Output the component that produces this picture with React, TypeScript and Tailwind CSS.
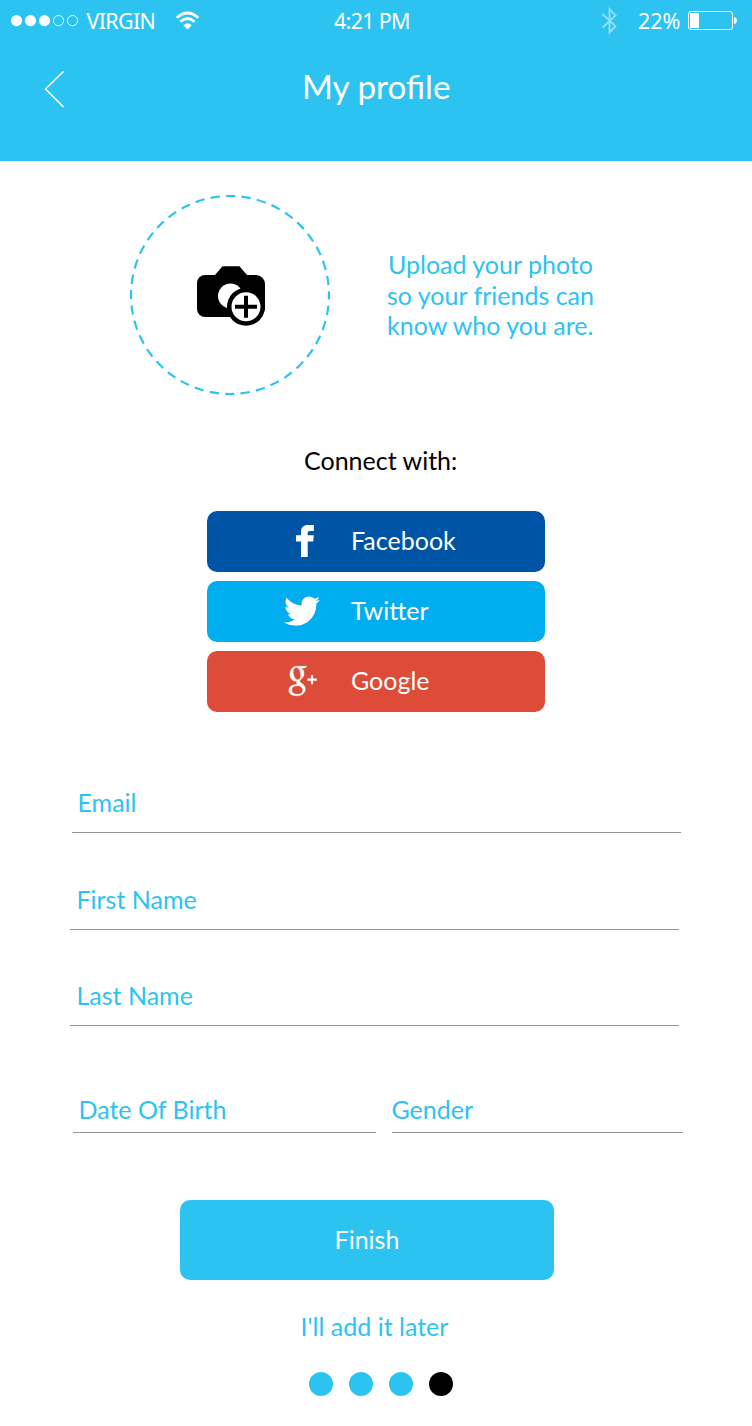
import React from "react";
import { FaTwitter } from "react-icons/fa";

function StatusBar() {
  return (
    <div className="flex h-[42px] items-center font-['Noto_Sans','Open_Sans',sans-serif] text-[21.5px] leading-[42px]">
      <svg className="ml-[10px] h-[14px] w-[70px]" viewBox="0 0 70 14" fill="#fff">
        <circle cx="6.5" cy="6.6" r="5.6" />
        <circle cx="20.5" cy="6.6" r="5.6" />
        <circle cx="34.5" cy="6.6" r="5.6" />
        <circle cx="48.5" cy="6.6" r="5.1" fill="none" stroke="#fff" />
        <circle cx="62.5" cy="6.6" r="5.1" fill="none" stroke="#fff" />
      </svg>
      <span className="ml-[6.5px] h-[42px] w-[88.5px] whitespace-nowrap tracking-[-0.7px]">VIRGIN</span>
      <svg className="h-[20px] w-[26px]" viewBox="0 0 26 20" fill="none" stroke="#fff" strokeWidth="2.8">
        <path d="M1.8 6.7Q12.5 -2.8 23.2 6.7" />
        <path d="M5.4 10.7Q12.5 4.3 19.6 10.7" />
        <path d="M8.3 14.2Q12.5 10.4 16.7 14.2L12.5 18.5Z" fill="#fff" stroke="none" />
      </svg>
      <span className="ml-[133px] h-[42px] w-[267px] whitespace-nowrap tracking-[-0.7px]">4:21 PM</span>
      <svg className="h-[28px] w-[18px]" viewBox="0 0 18 28" fill="none" stroke="#8fdff7" strokeWidth="1.9">
        <path d="M1.5 7L14.5 19.2L8.5 25.5V2.2L14.5 8.5L1.5 20.7" />
      </svg>
      <span className="ml-[19px] h-[42px] w-[50px] whitespace-nowrap tracking-[-0.1px]">22%</span>
      <svg className="h-[20px] w-[50px]" viewBox="0 0 50 20" fill="#fff">
        <rect x="0.5" y="0.5" width="44" height="18" rx="2.5" fill="none" stroke="#fff" />
        <rect x="2" y="2" width="9" height="15" rx="0.5" />
        <path d="M46 6.3Q49 6.6 49 9.6Q49 12.6 46 13Z" />
      </svg>
    </div>
  );
}

function CameraIcon() {
  return (
    <svg className="ml-[2px] mt-[2px] h-[62px] w-[70px]" viewBox="0 0 70 62">
      <path d="M9 10H19L26.5 1.2H43.5L51 10H60A9 9 0 0 1 69 19V43A9 9 0 0 1 60 52H9A8 8 0 0 1 1 44V18A8 8 0 0 1 9 10Z" />
      <circle cx="34.5" cy="31" r="12.5" fill="#fff" />
      <circle cx="50" cy="41.7" r="19" />
      <circle cx="50" cy="41.7" r="14.5" fill="#fff" />
      <path d="M50 30.8V52.8M39 41.7H61" stroke="#000" strokeWidth="4" />
    </svg>
  );
}

function FacebookIcon() {
  return (
    <svg className="h-[34px] w-[20px]" viewBox="0 0 20 34" fill="#fff">
      <path d="M6 33V17.5H1V11.3H6V8C6 3.2 8.5 1 13 1H18.8V7H15C13 7 12.7 8 12.7 9.5V11.3H18.8L18.2 17.5H12.7V33Z" />
    </svg>
  );
}

function GooglePlusIcon() {
  return (
    <svg className="h-[32px] w-[30px]" viewBox="0 0 30 32" fill="#fff">
      <path
        fillRule="evenodd"
        d="M9 1.2H19L16.8 2.9H13.5C15.3 4.400 16 6.400 16 8.600C16 11.200 14.800 12.900 13 14.300C11.600 15.400 11.200 16.300 12.500 17.400L14.600 19C16.500 20.500 17.300 22 17.300 24C17.300 28.200 13.600 30.800 8.600 30.800C3.800 30.800 .8 28.700 .8 25.300C.8 21.600 4.400 19.500 9.300 19.300C8.500 18.300 8.300 17.400 8.700 16.200C4.600 16.400 1.900 13.200 1.900 9.400C1.900 4.700 4.900 1.200 9 1.200ZM8.400 2.600C6.200 2.600 5 4.400 5.200 7.400C5.500 11.300 7.300 14.700 9.800 14.700C12 14.700 12.900 13 12.700 10C12.400 6.100 10.900 2.600 8.400 2.600ZM10.400 20.700C6.200 20.700 3.700 22.200 3.700 25C3.700 27.700 6.100 29.300 9.600 29.300C13 29.300 14.800 27.600 14.800 25.200C14.800 23.200 13.500 22.400 11.400 20.800Z"
        stroke="#fff"
        strokeWidth="0.4"
      />
      <path d="M24 10V19.2M19.4 14.600H28.800" stroke="#fff" strokeWidth="2.2" />
    </svg>
  );
}

function Social({ color, label, children }: { color: string; label: string; children: React.ReactNode }) {
  return (
    <button className={`flex h-[61px] w-[338px] items-center rounded-[10px] pb-[2px] text-white ${color}`}>
      <span className="ml-[73px] flex w-[71px] items-center">{children}</span>
      <span className="h-[31px]">{label}</span>
    </button>
  );
}

function Field({ label, className }: { label: string; className: string }) {
  return <div className={`border-b border-[#939393] leading-[28px] text-[#2dc3f1] ${className}`}>{label}</div>;
}

export default function App() {
  return (
    <div className="h-[1426px] w-[752px] overflow-hidden bg-white font-['Lato',sans-serif] text-[25px] leading-[30px] text-black">
      <header className="h-[161px] bg-[#2dc3f1] text-white">
        <StatusBar />
        <div className="flex h-[90px] items-center">
          <svg className="ml-[43.5px] mt-[4px] h-[38px] w-[22px]" viewBox="0 0 22 38" fill="none" stroke="#fff" strokeWidth="1.5">
            <path d="M19.5 1.5L1.5 19L19.5 37" />
          </svg>
          <h1 className="ml-[236.5px] mb-[2px] text-[33.3px] leading-[40px]">My profile</h1>
        </div>
      </header>

      <section className="flex items-center pt-[33px] pl-[129px] text-[#2dc3f1]">
        <div className="relative flex size-[202px] items-center justify-center">
          <svg className="absolute inset-0 size-[202px]" viewBox="0 0 202 202" fill="none">
            <circle cx="101" cy="101" r="99" stroke="#2dc3f1" strokeWidth="2.2" strokeDasharray="9.3 6.25" strokeDashoffset="4.65" />
          </svg>
          <CameraIcon />
        </div>
        <p className="ml-[56px] whitespace-pre leading-[30.5px]"><span className="ml-px">Upload your photo</span>{"\nso your friends can\nknow who you are."}</p>
      </section>

      <p className="ml-[304px] mt-[49px]">Connect with:</p>
      <div className="ml-[207px] mt-[36px] flex flex-col gap-[9px]">
        <Social color="bg-[#0054a6]" label="Facebook">
          <span className="ml-[15px] flex"><FacebookIcon /></span>
        </Social>
        <Social color="bg-[#00aeef]" label="Twitter">
          <FaTwitter className="ml-[4px] size-[36px]" />
        </Social>
        <Social color="bg-[#dd4b39]" label="Google">
          <span className="ml-[8px] flex"><GooglePlusIcon /></span>
        </Social>
      </div>

      <Field label="Email" className="ml-[72px] mt-[76px] h-[45px] w-[609px] pl-[5.5px]" />
      <Field label="First Name" className="ml-[70px] mt-[52px] h-[45px] w-[609px] pl-[6.5px]" />
      <Field label="Last Name" className="ml-[70px] mt-[51px] h-[45px] w-[609px] pl-[6.5px]" />
      <div className="mt-[69px] flex">
        <Field label="Date Of Birth" className="ml-[73px] h-[38px] w-[303px] pl-[5.5px]" />
        <Field label="Gender" className="ml-[16px] h-[38px] w-[291px] indent-[-0.5px]" />
      </div>

      <button className="ml-[180px] mt-[67px] block h-[80px] w-[374px] rounded-[10px] bg-[#2dc3f1] pb-[2px] text-white">Finish</button>
      <p className="ml-[300.5px] mt-[31px] text-[#2dc3f1]">I'll add it later</p>
      <div className="ml-[309px] mt-[31px] flex gap-[16px]">
        <i className="size-[24px] rounded-full bg-[#2dc3f1]" />
        <i className="size-[24px] rounded-full bg-[#2dc3f1]" />
        <i className="size-[24px] rounded-full bg-[#2dc3f1]" />
        <i className="size-[24px] rounded-full bg-black" />
      </div>
    </div>
  );
}
